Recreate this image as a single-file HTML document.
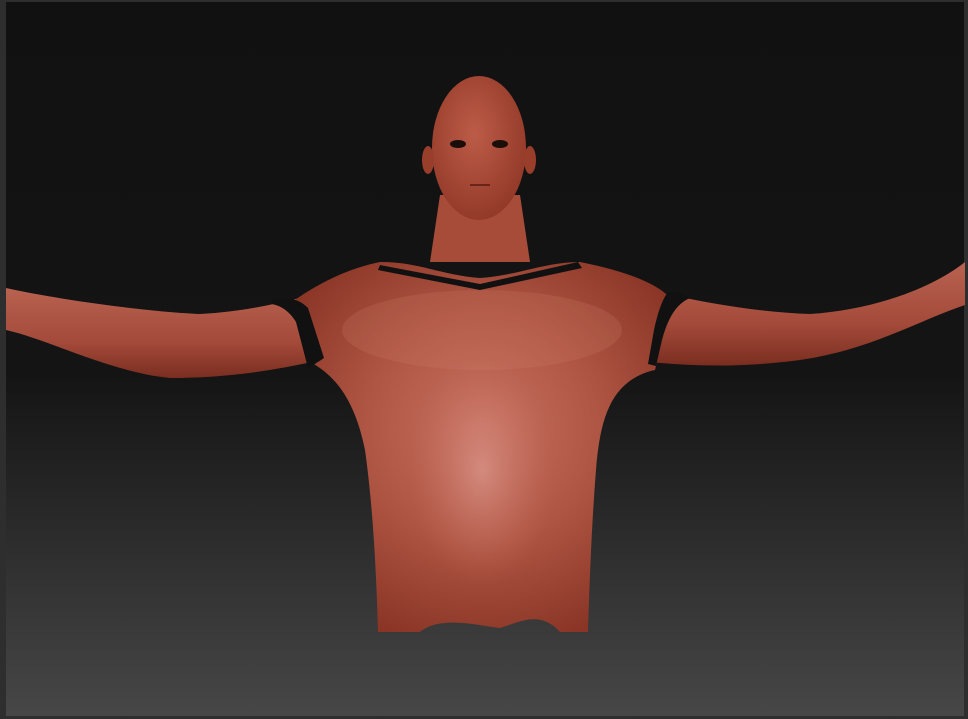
<!DOCTYPE html>
<html><head><style>
html,body{margin:0;padding:0;width:968px;height:719px;overflow:hidden;background:#2e2e2e}
svg{display:block}
</style></head><body>
<svg width="968" height="719" viewBox="0 0 968 719">
<defs>
<linearGradient id="bg" x1="0" y1="0" x2="0" y2="1">
<stop offset="0" stop-color="#111"/>
<stop offset="0.52" stop-color="#141414"/>
<stop offset="0.75" stop-color="#2c2c2c"/>
<stop offset="1" stop-color="#474747"/>
</linearGradient>
<radialGradient id="skin" cx="0.5" cy="0.45" r="0.6">
<stop offset="0" stop-color="#c87262"/>
<stop offset="0.5" stop-color="#b05644"/>
<stop offset="1" stop-color="#8a3526"/>
</radialGradient>
<linearGradient id="arm" x1="0" y1="0" x2="0" y2="1">
<stop offset="0" stop-color="#b86250"/>
<stop offset="0.6" stop-color="#a44a3a"/>
<stop offset="1" stop-color="#7a2e20"/>
</linearGradient>
<radialGradient id="head" cx="0.45" cy="0.4" r="0.6">
<stop offset="0" stop-color="#bc5c48"/>
<stop offset="1" stop-color="#943a29"/>
</radialGradient>
<radialGradient id="belly" cx="0.5" cy="0.5" r="0.5">
<stop offset="0" stop-color="#d89488" stop-opacity="0.8"/>
<stop offset="1" stop-color="#c46a5a" stop-opacity="0"/>
</radialGradient>
</defs>
<rect x="6" y="2" width="958" height="714" fill="url(#bg)"/>
<path d="M6 288 C60 300 150 312 200 314 C240 312 270 305 300 298 L320 360 C270 372 220 378 170 378 C110 372 50 340 6 330 Z" fill="url(#arm)"/>
<path d="M965 262 L965 305 C920 320 870 350 800 360 C740 368 690 366 650 362 L668 294 C710 304 760 312 810 314 C870 310 930 290 965 262 Z" fill="url(#arm)"/>
<path d="M440 195 L520 195 L530 262 L430 262 Z" fill="#a84c3a"/>
<path d="M380 262 C420 262 440 275 480 278 C520 275 545 262 580 262 C630 272 660 285 672 300 L655 370 C610 380 600 420 596 470 C592 520 590 570 588 632 L560 632 C540 610 520 622 500 628 C480 626 440 615 420 632 L378 632 C376 560 372 500 365 450 C355 400 335 375 310 362 L292 302 C320 282 350 268 380 262 Z" fill="url(#skin)"/>
<ellipse cx="482" cy="470" rx="72" ry="115" fill="url(#belly)"/>
<ellipse cx="482" cy="330" rx="140" ry="40" fill="#d08070" opacity="0.2"/>
<path d="M380 265 L480 284 L578 262 L582 268 L480 290 L378 270 Z" fill="#111"/>
<path d="M272 300 C290 296 300 300 308 308 L324 358 C318 362 312 366 308 368 L296 322 C290 312 282 306 272 304 Z" fill="#111"/>
<path d="M668 292 C678 292 684 294 690 298 C676 304 668 318 662 340 L656 366 L648 364 L654 330 C658 312 662 300 668 292 Z" fill="#111"/>
<ellipse cx="479" cy="148" rx="47" ry="72" fill="url(#head)"/>
<ellipse cx="458" cy="144" rx="8" ry="4" fill="#1a0d0a"/>
<ellipse cx="500" cy="144" rx="8" ry="4" fill="#1a0d0a"/>
<path d="M470 185 L490 185" stroke="#6a2418" stroke-width="2"/>
<ellipse cx="428" cy="160" rx="6" ry="14" fill="#9a3e2c"/>
<ellipse cx="530" cy="160" rx="6" ry="14" fill="#9a3e2c"/>
</svg>
</body></html>
